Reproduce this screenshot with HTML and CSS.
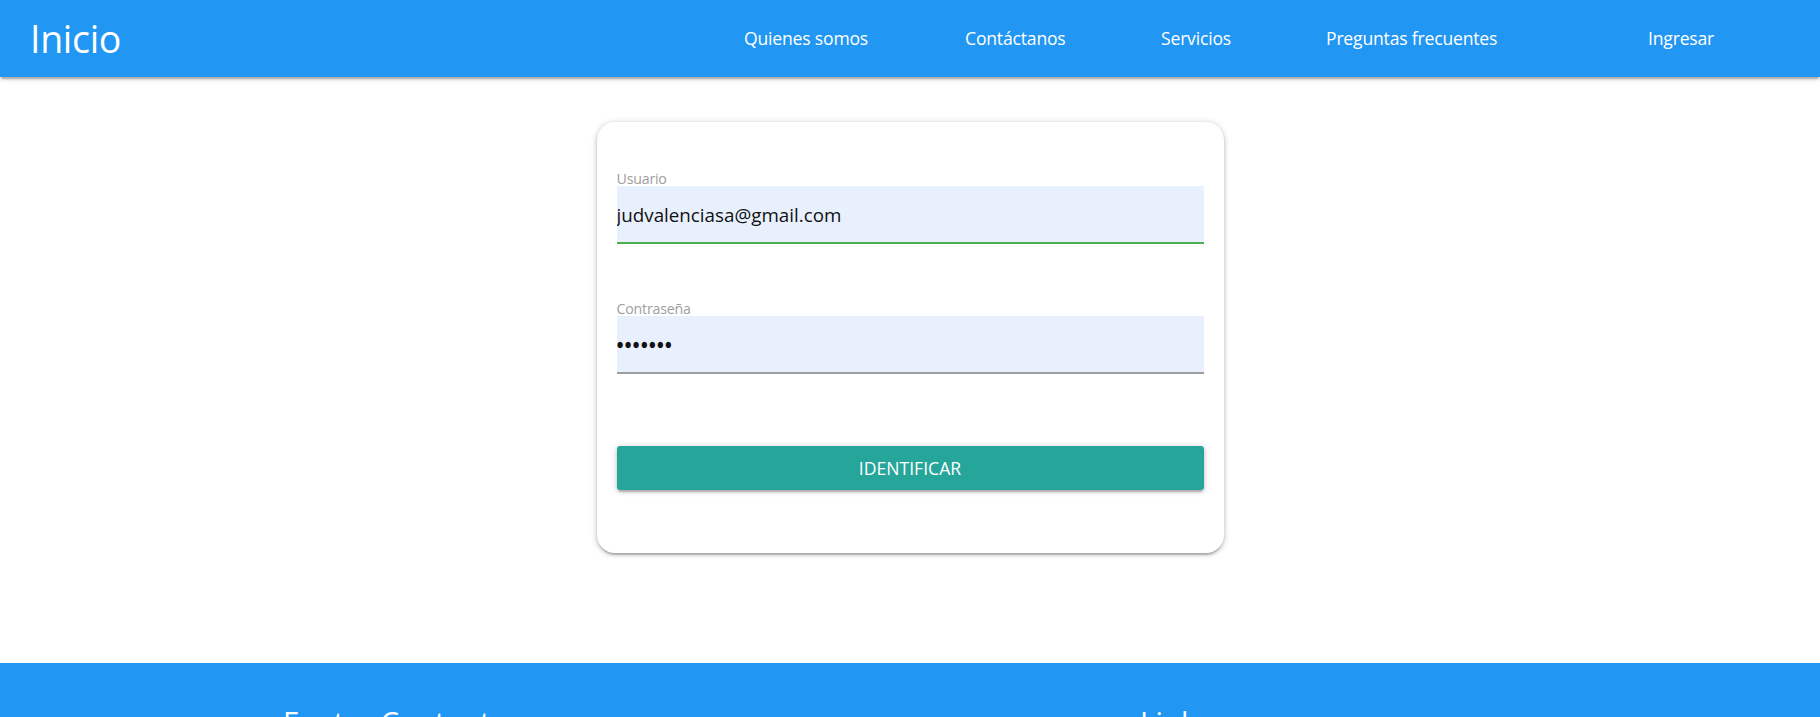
FILE: index.html
```html
<!DOCTYPE html>
<html lang="es">
<head>
<meta charset="utf-8">
<title>Inicio</title>
<link rel="stylesheet" href="styles.css">
</head>
<body>
<header class="topbar">
  <a class="brand" href="#">Inicio</a>
  <ul class="nav-links">
    <li><a href="#">Quienes somos</a></li>
    <li><a href="#">Contáctanos</a></li>
    <li><a href="#">Servicios</a></li>
    <li><a href="#">Preguntas frecuentes</a></li>
    <li><a href="#">Ingresar</a></li>
  </ul>
</header>
<main class="main">
  <form class="card">
    <label class="field-label" for="usuario">Usuario</label>
    <input class="field field-valid" id="usuario" type="text" value="judvalenciasa@gmail.com" readonly>
    <label class="field-label field-label-second" for="clave">Contraseña</label>
    <input class="field field-password" id="clave" type="password" value="1234567" readonly>
    <button class="btn" type="button">Identificar</button>
  </form>
</main>
<footer class="footer">
  <div class="footer-row">
    <h5 class="footer-title">Footer Content</h5>
    <h5 class="footer-title footer-links">Links</h5>
  </div>
  <div class="footer-body"></div>
</footer>
</body>
</html>
```

FILE: styles.css
```css
html, body {
  margin: 0;
  padding: 0;
}
body {
  font-family: "Open Sans", "Noto Sans", sans-serif;
  background: #fff;
  color: rgba(0,0,0,0.87);
}
.topbar {
  height: 77px;
  background: #2196F3;
  display: flex;
  align-items: center;
  box-shadow: 0 2px 3px 0 rgba(0,0,0,.14), 0 4px 1px -2px rgba(0,0,0,.12), 0 1px 6px 0 rgba(0,0,0,.2);
  position: relative;
  z-index: 2;
}
.brand {
  color: #fff;
  text-decoration: none;
  font-size: 37.5px;
  font-weight: 400;
  padding-left: 30px;
  line-height: 77px;
  letter-spacing: -0.3px;
}
.nav-links {
  list-style: none;
  margin: 0 0 0 auto;
  padding: 0;
  display: grid;
  grid-template-columns: 221px 196px 165px 322px 172px;
}
.nav-links a {
  color: #fff;
  text-decoration: none;
  font-size: 17.6px;
  line-height: 77px;
  letter-spacing: -0.2px;
}
.main {
  padding: 45px 0 110px;
  display: flex;
  justify-content: center;
}
.card {
  width: 587px;
  padding: 50px 20px 63px;
  background: #fff;
  border-radius: 18px;
  box-shadow: 0 2px 3px 0 rgba(0,0,0,.14), 0 4px 1px -2px rgba(0,0,0,.12), 0 1px 6px 0 rgba(0,0,0,.22);
  display: flex;
  flex-direction: column;
}
.field-label {
  display: block;
  color: #9e9e9e;
  font-size: 14.2px;
  line-height: 14px;
  height: 14px;
  letter-spacing: -0.2px;
}
.field-label-second {
  margin-top: 58px;
}
.field {
  display: block;
  box-sizing: content-box;
  width: 587px;
  height: 54px;
  margin: 0;
  padding: 2px 0 0;
  border: none;
  border-bottom: 2px solid #9e9e9e;
  background: #E8F0FE;
  font-family: "Open Sans", "Noto Sans", sans-serif;
  font-size: 18.8px;
  color: #111;
  outline: none;
  letter-spacing: 0;
}
.field-valid {
  border-bottom-color: #4CAF50;
}
.field-password {
  font-size: 19px;
  letter-spacing: 0.9px;
  font-weight: 700;
}
.btn {
  margin-top: 72px;
  height: 44px;
  border: none;
  border-radius: 3px;
  background: #26a69a;
  color: #fff;
  font-family: "Open Sans", "Noto Sans", sans-serif;
  font-size: 17.6px;
  text-transform: uppercase;
  letter-spacing: 0;
  box-shadow: 0 2px 3px 0 rgba(0,0,0,.14), 0 4px 1px -2px rgba(0,0,0,.12), 0 1px 6px 0 rgba(0,0,0,.2);
  cursor: pointer;
}
.footer {
  background: #2196F3;
  padding-top: 43px;
  color: #fff;
}
.footer-row {
  display: grid;
  grid-template-columns: 857px auto;
  padding-left: 283px;
}
.footer-title {
  margin: 0;
  font-size: 29.5px;
  font-weight: 400;
  line-height: 1.1;
}
.footer-body {
  height: 200px;
}
```
